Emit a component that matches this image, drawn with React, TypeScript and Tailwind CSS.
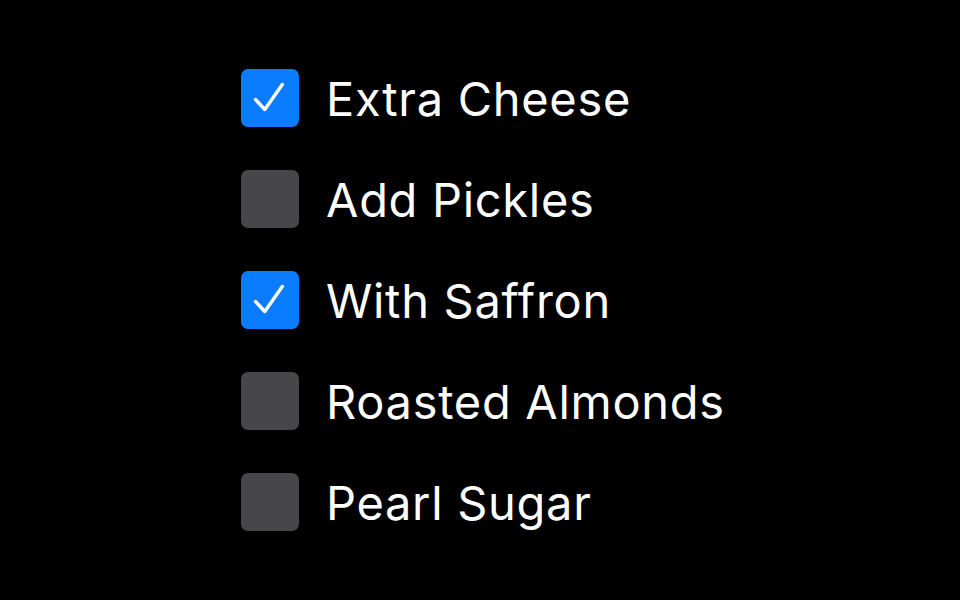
import React from "react";

const items = [
  { label: "Extra Cheese", checked: true },
  { label: "Add Pickles", checked: false },
  { label: "With Saffron", checked: true },
  { label: "Roasted Almonds", checked: false },
  { label: "Pearl Sugar", checked: false },
];

function Box({ checked }: { checked: boolean }) {
  return (
    <div
      className={
        "w-[58px] h-[58px] rounded-[7px] flex-none flex items-center justify-center " +
        (checked ? "bg-[#0a7cff]" : "bg-[#474749]")
      }
    >
      {checked && (
        <svg width="58" height="58" viewBox="0 0 58 58" fill="none">
          <path
            d="M14.5 30.5 L23.8 40.5 L41.3 15.5"
            stroke="white"
            strokeWidth="3.4"
            strokeLinecap="round"
            strokeLinejoin="round"
          />
        </svg>
      )}
    </div>
  );
}

export default function App() {
  return (
    <div
      className="w-[960px] h-[600px] bg-black flex items-center pl-[241px]"
      style={{ fontFamily: "Inter, 'Noto Sans', sans-serif" }}
    >
      <div className="flex flex-col gap-[43px]">
        {items.map((it) => (
          <div key={it.label} className="flex items-center gap-[27px] h-[58px]">
            <Box checked={it.checked} />
            <span className="text-white text-[47px] leading-none tracking-[0.7px]">{it.label}</span>
          </div>
        ))}
      </div>
    </div>
  );
}
